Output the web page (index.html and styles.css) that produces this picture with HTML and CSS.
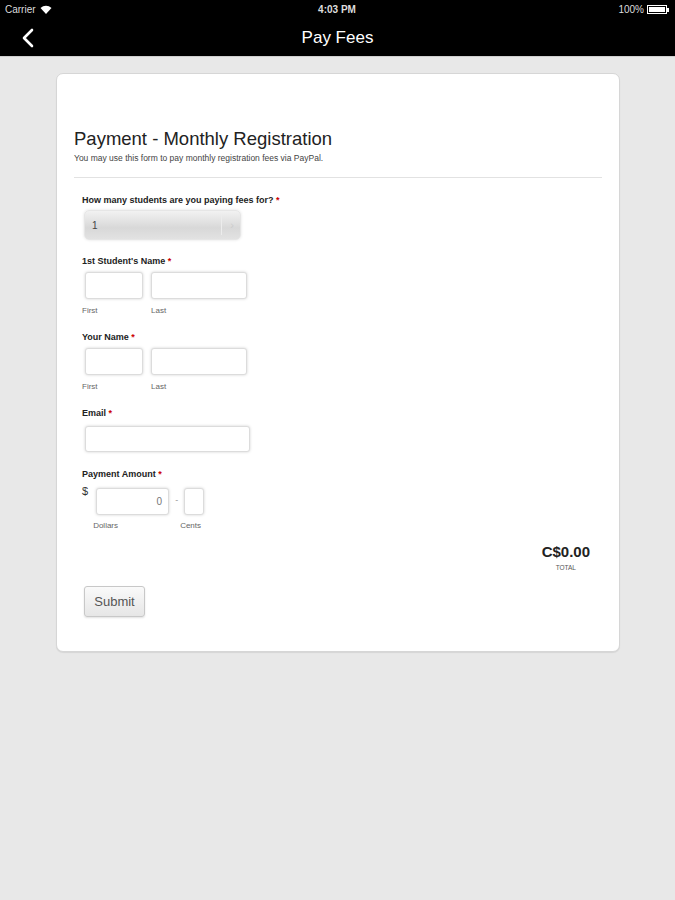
FILE: index.html
```html
<!DOCTYPE html>
<html>
<head>
<meta charset="utf-8">
<link rel="stylesheet" href="styles.css">
</head>
<body>
<div class="top">
  <div class="status">
    <div class="st-left">Carrier
      <svg class="wifi" width="12" height="9" viewBox="0 0 12 9"><path d="M6 9 L0.5 3 A8 8 0 0 1 11.5 3 Z" fill="#fff"/></svg>
    </div>
    <div class="st-mid">4:03 PM</div>
    <div class="st-right">100%
      <span class="battery"><span class="batt-fill"></span></span><span class="batt-tip"></span>
    </div>
  </div>
  <div class="nav">
    <svg class="back" width="14" height="20" viewBox="0 0 14 20"><path d="M11 2 L3 10 L11 18" fill="none" stroke="#fff" stroke-width="2.6" stroke-linecap="round" stroke-linejoin="round"/></svg>
    <div class="nav-title">Pay Fees</div>
  </div>
</div>
<div class="main">
  <div class="card">
    <h1 class="title">Payment - Monthly Registration</h1>
    <p class="desc">You may use this form to pay monthly registration fees via PayPal.</p>
    <div class="rule"></div>
    <div class="fields">
      <div class="field">
        <div class="label">How many students are you paying fees for? <span class="req">*</span></div>
        <div class="select"><span>1</span><span class="sel-arrow">&#8250;</span></div>
      </div>
      <div class="field">
        <div class="label">1st Student's Name <span class="req">*</span></div>
        <div class="name-row">
          <div class="sub"><div class="input w-first"></div><div class="hint">First</div></div>
          <div class="sub"><div class="input w-last"></div><div class="hint">Last</div></div>
        </div>
      </div>
      <div class="field">
        <div class="label">Your Name <span class="req">*</span></div>
        <div class="name-row">
          <div class="sub"><div class="input w-first"></div><div class="hint">First</div></div>
          <div class="sub"><div class="input w-last"></div><div class="hint">Last</div></div>
        </div>
      </div>
      <div class="field">
        <div class="label">Email <span class="req">*</span></div>
        <div class="input w-email"></div>
      </div>
      <div class="field pay">
        <div class="label">Payment Amount <span class="req">*</span></div>
        <div class="amount-row">
          <span class="dollar">$</span>
          <div class="sub"><div class="input w-dollars">0</div><div class="hint hint-d">Dollars</div></div>
          <span class="dash">-</span>
          <div class="sub"><div class="input w-cents"></div><div class="hint hint-c">Cents</div></div>
        </div>
      </div>
    </div>
    <div class="total">
      <div class="total-val">C$0.00</div>
      <div class="total-lbl">TOTAL</div>
    </div>
    <button class="submit">Submit</button>
  </div>
</div>
</body>
</html>
```
FILE: styles.css
```css
* { box-sizing: border-box; }
html, body { margin: 0; padding: 0; }
body {
  width: 675px;
  height: 900px;
  background: #e8e8e8;
  font-family: "Liberation Sans", Arial, sans-serif;
  color: #222;
  overflow: hidden;
}
.top { background: #000; color: #fff; height: 57px; border-bottom: 1px solid #cfcfcf; }
.status {
  height: 19px;
  display: flex;
  align-items: center;
  justify-content: space-between;
  padding: 0 6px 0 5px;
  font-size: 10px;
  color: #ddd;
}
.st-left, .st-right { display: flex; align-items: center; gap: 4px; width: 120px; }
.st-right { justify-content: flex-end; gap: 3px; }
.st-mid { font-weight: bold; color: #ddd; }
.battery {
  display: inline-block;
  width: 20px;
  height: 9px;
  border: 1px solid #fff;
  padding: 1px;
}
.batt-fill { display: block; width: 100%; height: 100%; background: #fff; }
.batt-tip { display: inline-block; width: 2px; height: 4px; background: #fff; margin-left: -3px; }
.nav {
  height: 37px;
  display: flex;
  align-items: center;
  justify-content: center;
  position: relative;
}
.back { position: absolute; left: 21px; top: 9px; }
.nav-title { font-size: 17px; color: #fff; margin-top: 0; }
.main { padding: 16px 55px 0 56px; }
.card {
  background: #fff;
  border: 1px solid #d6d6d6;
  border-radius: 7px;
  box-shadow: 0 1px 1px rgba(0,0,0,0.08);
  height: 579px;
  padding: 54px 17px 0 17px;
}
.title { font-size: 18.5px; font-weight: normal; margin: 0; color: #222; line-height: 22px; }
.desc { font-size: 8.5px; color: #444; margin: 3px 0 0 0; line-height: 11px; }
.rule { height: 1px; background: #e2e2e2; margin-top: 13px; }
.fields { padding: 16px 0 0 8px; display: flex; flex-direction: column; gap: 15px; }
.field { display: flex; flex-direction: column; }
.label { font-size: 9px; font-weight: bold; color: #222; line-height: 12px; }
.req { color: #c00; }
.select {
  margin: 4px 0 0 2px;
  width: 157px;
  height: 30px;
  border-radius: 5px;
  border: 1px solid #e6e6e6;
  background: linear-gradient(#f2f2f2, #d8d8d8 60%, #e2e2e2);
  box-shadow: 0 0 3px rgba(0,0,0,0.12);
  display: flex;
  align-items: center;
  justify-content: space-between;
  padding: 0 6px 0 7px;
  font-size: 10px;
  color: #444;
  position: relative;
}
.select::after {
  content: "";
  position: absolute;
  right: 18px; top: 4px; bottom: 4px;
  width: 1px;
  background: #ececec;
}
.sel-arrow { color: #ccc; font-size: 11px; }
.name-row { display: flex; gap: 8px; margin-top: 5px; }
.sub { display: flex; flex-direction: column; }
.input {
  height: 27px;
  border: 1px solid #dcdcdc;
  border-radius: 3px;
  background: #fff;
  box-shadow: 0 0 3px rgba(0,0,0,0.18);
  margin-left: 3px;
}
.w-first { width: 58px; }
.w-last { width: 96px; margin-left: 0; }
.w-email { width: 165px; height: 26px; margin-top: 7px; }
.hint { font-size: 8px; color: #666; margin-top: 7px; line-height: 10px; }
.pay { margin-top: 1px; }
.amount-row { display: flex; align-items: flex-start; margin-top: 1px; }
.dollar { font-size: 11px; color: #333; margin-top: 4px; }
.w-dollars {
  width: 73px;
  margin-left: 8px;
  margin-top: 7px;
  font-size: 10px;
  color: #777;
  text-align: right;
  padding: 7px 6px 0 0;
}
.dash { font-size: 9px; color: #999; margin: 14px 4px 0 6px; }
.w-cents { width: 20px; margin-left: 2px; margin-top: 7px; }
.hint-d { margin-top: 6px; margin-left: 5px; }
.hint-c { margin-top: 6px; margin-left: -2px; }
.total {
  display: flex;
  flex-direction: column;
  align-items: flex-end;
  margin: 12px 12px 0 0;
}
.total-val { font-size: 15px; font-weight: bold; color: #222; line-height: 18px; }
.total-lbl { font-size: 6.5px; color: #555; margin-right: 14px; margin-top: 3px; }
.submit {
  margin: 15px 0 0 10px;
  width: 61px;
  height: 31px;
  border: 1px solid #c8c8c8;
  border-radius: 3px;
  background: linear-gradient(#fafafa, #e6e6e6);
  box-shadow: 0 1px 2px rgba(0,0,0,0.12);
  font-family: "Liberation Sans", Arial, sans-serif;
  font-size: 13px;
  color: #555;
  padding: 0;
}
```
